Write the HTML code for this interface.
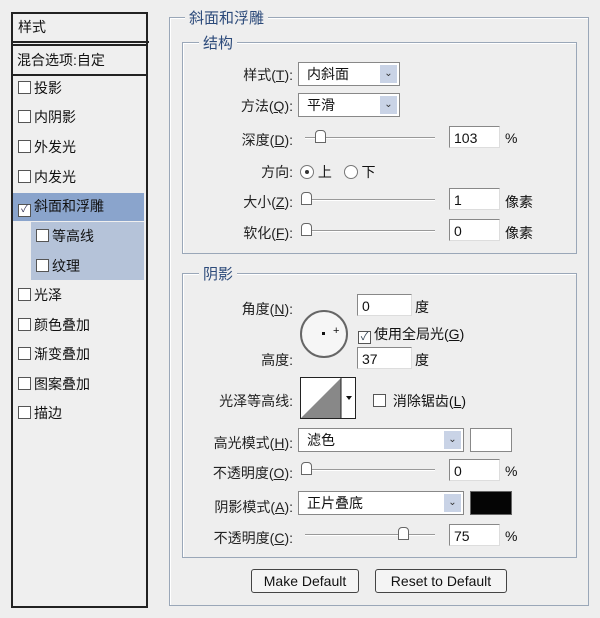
<!DOCTYPE html>
<html style="overflow:hidden;width:600px;height:618px"><head><meta charset="utf-8"><style>
body{margin:0;width:600px;height:618px;background:#eeeeee;font-family:"Liberation Sans","Noto Sans CJK SC",sans-serif;font-size:14px;color:#111;position:relative;overflow:hidden}
.a{position:absolute;white-space:nowrap}
.box{position:absolute;border:1px solid #9aa7b8;box-shadow:inset 1px 1px 0 #fff}
.leg{position:absolute;background:#eeeeee;padding:0 4px;color:#2c4a7a;font-size:15px}
.cb{display:inline-block;width:11px;height:11px;border:1px solid #555;background:#fff;vertical-align:-1px;margin-right:3px}
.inp{position:absolute;background:#fff;border:1px solid #888;border-right-color:#ddd;border-bottom-color:#ddd;height:22px;line-height:22px;padding-left:4px;box-sizing:border-box}
.sel{position:absolute;background:#fff;border:1px solid #888;height:24px;line-height:22px;padding-left:8px;box-sizing:border-box}
.sel i{position:absolute;right:2px;top:2px;width:17px;height:18px;background:#c9d3e6;font-style:normal;font-size:10px;text-align:center;line-height:18px;color:#333}
.sl{position:absolute;height:1px;background:#999;border-bottom:1px solid #fff}
.th{position:absolute;width:9px;height:11px;background:#fff;border:1px solid #666;border-radius:4px 4px 0 0}
.lbl{position:absolute;text-align:right;white-space:nowrap;color:#222}
.row{position:absolute;left:18px;height:29px;line-height:29px}
.btn{position:absolute;border:1px solid #444;border-radius:3px;background:#f4f4f4;text-align:center;line-height:22px;height:24px;box-sizing:border-box;font-size:14px}
</style></head><body>
<div class="a" style="left:11px;top:12px;width:133px;height:592px;border:2px solid #222;background:#efefef"></div>
<div class="a" style="left:13px;top:14px;width:131px;height:27px;border-bottom:2px solid #222;line-height:26px;padding-left:5px">样式</div>
<div class="a" style="left:13px;top:44px;width:131px;height:28px;border-top:2px solid #222;border-bottom:2px solid #222;line-height:29px;padding-left:4px">混合选项:自定</div>
<div class="a" style="left:13px;top:193px;width:131px;height:28px;background:#8aa4cc"></div>
<div class="a" style="left:31px;top:222px;width:113px;height:58px;background:#b5c3d9"></div>
<div class="row" style="top:74px"><span class="cb"></span>投影</div>
<div class="row" style="top:103px"><span class="cb"></span>内阴影</div>
<div class="row" style="top:133px"><span class="cb"></span>外发光</div>
<div class="row" style="top:163px"><span class="cb"></span>内发光</div>
<div class="row" style="top:192px"><span class="cb" style="font-size:10px;line-height:10px;text-align:center;color:#335">✓</span>斜面和浮雕</div>
<div class="row" style="top:222px;left:36px"><span class="cb"></span>等高线</div>
<div class="row" style="top:252px;left:36px"><span class="cb"></span>纹理</div>
<div class="row" style="top:281px"><span class="cb"></span>光泽</div>
<div class="row" style="top:311px"><span class="cb"></span>颜色叠加</div>
<div class="row" style="top:340px"><span class="cb"></span>渐变叠加</div>
<div class="row" style="top:370px"><span class="cb"></span>图案叠加</div>
<div class="row" style="top:399px"><span class="cb"></span>描边</div>

<div class="box" style="left:169px;top:17px;width:418px;height:587px"></div>
<div class="leg" style="left:185px;top:7px">斜面和浮雕</div>
<div class="box" style="left:182px;top:42px;width:393px;height:210px"></div>
<div class="leg" style="left:199px;top:32px">结构</div>
<div class="lbl" style="right:307px;top:65px">样式(<u>T</u>):</div>
<div class="sel" style="left:298px;top:62px;width:102px">内斜面<i>⌄</i></div>
<div class="lbl" style="right:307px;top:96px">方法(<u>Q</u>):</div>
<div class="sel" style="left:298px;top:93px;width:102px">平滑<i>⌄</i></div>
<div class="lbl" style="right:307px;top:130px">深度(<u>D</u>):</div>
<div class="sl" style="left:305px;top:137px;width:130px"></div><div class="th" style="left:315px;top:130px"></div>
<div class="inp" style="left:449px;top:126px;width:51px">103</div><div class="a" style="left:505px;top:130px">%</div>
<div class="lbl" style="right:307px;top:162px">方向:</div>
<div class="a" style="left:300px;top:162px"><span style="display:inline-block;width:12px;height:12px;border:1px solid #777;border-radius:50%;background:#fff;vertical-align:-2px;position:relative"><span style="position:absolute;left:4px;top:4px;width:4px;height:4px;background:#333;border-radius:50%"></span></span> 上 &nbsp;&nbsp;<span style="display:inline-block;width:12px;height:12px;border:1px solid #777;border-radius:50%;background:#fff;vertical-align:-2px"></span> 下</div>
<div class="lbl" style="right:307px;top:192px">大小(<u>Z</u>):</div>
<div class="sl" style="left:305px;top:199px;width:130px"></div><div class="th" style="left:301px;top:192px"></div>
<div class="inp" style="left:449px;top:188px;width:51px">1</div><div class="a" style="left:505px;top:192px">像素</div>
<div class="lbl" style="right:307px;top:223px">软化(<u>F</u>):</div>
<div class="sl" style="left:305px;top:230px;width:130px"></div><div class="th" style="left:301px;top:223px"></div>
<div class="inp" style="left:449px;top:219px;width:51px">0</div><div class="a" style="left:505px;top:223px">像素</div>

<div class="box" style="left:182px;top:273px;width:393px;height:283px"></div>
<div class="leg" style="left:199px;top:263px">阴影</div>
<div class="lbl" style="right:307px;top:299px">角度(<u>N</u>):</div>
<div class="a" style="left:300px;top:310px;width:44px;height:44px;border:2px solid #666;border-radius:50%;background:#f6f6f6"></div>
<div class="a" style="left:322px;top:332px;width:3px;height:3px;background:#111"></div>
<div class="a" style="left:333px;top:325px;font-size:11px">+</div>
<div class="inp" style="left:357px;top:294px;width:55px">0</div><div class="a" style="left:415px;top:297px">度</div>
<div class="a" style="left:358px;top:324px"><span class="cb" style="font-size:11px;line-height:11px;text-align:center;color:#345">✓</span>使用全局光(<u>G</u>)</div>
<div class="lbl" style="right:307px;top:350px">高度:</div>
<div class="inp" style="left:357px;top:347px;width:55px">37</div><div class="a" style="left:415px;top:350px">度</div>
<div class="lbl" style="right:307px;top:391px">光泽等高线:</div>
<div class="a" style="left:300px;top:377px;width:54px;height:40px;border:1px solid #222;background:#fff;overflow:hidden">
<svg width="54" height="40"><polygon points="0,40 40,0 40,40" fill="#888"/><line x1="40" y1="0" x2="40" y2="40" stroke="#222"/><polygon points="45,18 51,18 48,22" fill="#111"/></svg></div>
<div class="a" style="left:373px;top:391px"><span class="cb"></span> 消除锯齿(<u>L</u>)</div>
<div class="lbl" style="right:307px;top:433px">高光模式(<u>H</u>):</div>
<div class="sel" style="left:298px;top:428px;width:166px">滤色<i>⌄</i></div>
<div class="a" style="left:470px;top:428px;width:40px;height:22px;border:1px solid #888;background:#fff"></div>
<div class="lbl" style="right:307px;top:463px">不透明度(<u>O</u>):</div>
<div class="sl" style="left:305px;top:469px;width:130px"></div><div class="th" style="left:301px;top:462px"></div>
<div class="inp" style="left:449px;top:459px;width:51px">0</div><div class="a" style="left:505px;top:463px">%</div>
<div class="lbl" style="right:307px;top:497px">阴影模式(<u>A</u>):</div>
<div class="sel" style="left:298px;top:491px;width:166px">正片叠底<i>⌄</i></div>
<div class="a" style="left:470px;top:491px;width:40px;height:22px;border:1px solid #666;background:#050505"></div>
<div class="lbl" style="right:307px;top:528px">不透明度(<u>C</u>):</div>
<div class="sl" style="left:305px;top:534px;width:130px"></div><div class="th" style="left:398px;top:527px"></div>
<div class="inp" style="left:449px;top:524px;width:51px">75</div><div class="a" style="left:505px;top:528px">%</div>

<div class="btn" style="left:251px;top:569px;width:108px">Make Default</div>
<div class="btn" style="left:375px;top:569px;width:132px">Reset to Default</div>
</body></html>
